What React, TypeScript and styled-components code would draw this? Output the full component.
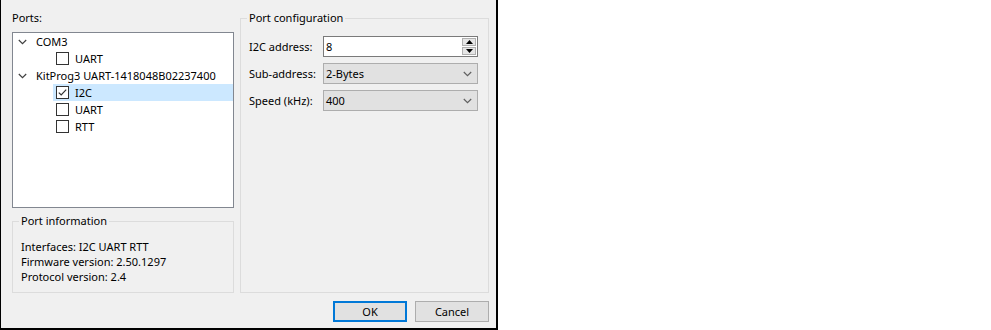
import React from "react";
import styled, { createGlobalStyle } from "styled-components";

const GlobalStyle = createGlobalStyle`
  html, body {
    margin: 0;
    padding: 0;
    background: #ffffff;
  }
  body {
    font-family: "Noto Sans", "Segoe UI", sans-serif;
    font-size: 11px;
    color: #000000;
  }
`;

const Dialog = styled.div`
  width: 498px;
  height: 330px;
  box-sizing: border-box;
  background: #f0f0f0;
  border-left: 1px solid #000;
  border-right: 2px solid #000;
  border-bottom: 2px solid #000;
  padding: 10px 7px 6px 11px;
  display: flex;
  flex-direction: column;
`;

const Main = styled.div`
  display: grid;
  grid-template-columns: 222px 249px;
  column-gap: 6px;
`;

const LeftColumn = styled.div`
  display: flex;
  flex-direction: column;
`;

const PortsLabel = styled.div`
  line-height: 16px;
  height: 16px;
  margin-bottom: 6px;
`;

const Tree = styled.div`
  height: 176px;
  box-sizing: border-box;
  border: 1px solid #828790;
  background: #ffffff;
`;

const Row = styled.div`
  display: flex;
  height: 17px;
`;

const Indent = styled.div<{ $level: number }>`
  width: ${(p) => (p.$level === 0 ? 0 : 40)}px;
  flex: none;
`;

const Item = styled.div<{ $selected?: boolean; $level: number }>`
  flex: 1;
  display: flex;
  align-items: center;
  padding-left: ${(p) => (p.$level === 0 ? 0 : 3)}px;
  background: ${(p) => (p.$selected ? "#cce8ff" : "transparent")};
  white-space: nowrap;
`;

const Expander = styled.div`
  width: 23px;
  flex: none;
  display: flex;
  align-items: center;
  padding-left: 5px;
  box-sizing: border-box;
`;

const Check = styled.div`
  width: 13px;
  height: 13px;
  box-sizing: border-box;
  border: 1px solid #333333;
  background: #ffffff;
  margin-right: 6px;
  flex: none;
  display: flex;
`;

const Group = styled.fieldset<{ $height: number; $top?: number }>`
  margin: ${(p) => p.$top ?? 0}px 0 0 0;
  padding: 0;
  height: ${(p) => p.$height}px;
  box-sizing: border-box;
  border: 1px solid #dcdcdc;
  min-width: 0;
`;

const Legend = styled.legend`
  margin-left: 6px;
  padding: 0 2px;
  line-height: 14px;
  font-size: 11px;
`;

const InfoLines = styled.div`
  padding: 11px 0 0 8px;
  line-height: 15px;
`;

const FieldGrid = styled.div`
  padding: 11px 0 0 8px;
  display: grid;
  grid-template-columns: 74px 155px;
  grid-auto-rows: 21px;
  row-gap: 6px;
  align-items: center;
`;

const SpinBox = styled.div`
  height: 21px;
  box-sizing: border-box;
  border: 1px solid #7a7a7a;
  background: #ffffff;
  display: flex;
  align-items: center;
  padding-left: 2px;
  padding-right: 1px;
`;

const FieldText = styled.span`
  flex: 1;
`;

const Spinner = styled.div`
  width: 14px;
  height: 17px;
  display: flex;
  flex-direction: column;
  gap: 1px;
`;

const SpinButton = styled.div`
  flex: 1;
  background: #e5e5e5;
  border: 1px solid #b0b0b0;
  box-sizing: border-box;
  display: flex;
  align-items: center;
  justify-content: center;
`;

const Combo = styled.div`
  height: 21px;
  box-sizing: border-box;
  border: 1px solid #adadad;
  background: #e1e1e1;
  display: flex;
  align-items: center;
  padding-left: 2px;
  padding-right: 5px;
`;

const ButtonRow = styled.div`
  display: flex;
  justify-content: flex-end;
  gap: 8px;
  margin-top: 8px;
`;

const Button = styled.button<{ $default?: boolean }>`
  width: 74px;
  height: 21px;
  box-sizing: border-box;
  margin: 0;
  padding: 0;
  font-family: inherit;
  font-size: 11px;
  color: #000;
  background: #e1e1e1;
  border: ${(p) => (p.$default ? "2px solid #0078d7" : "1px solid #adadad")};
`;

const Chevron = ({ color = "#555" }: { color?: string }) => (
  <svg width="9" height="6" viewBox="0 0 9 6">
    <path d="M0.8 1 L4.5 4.6 L8.2 1" fill="none" stroke={color} strokeWidth="1.2" />
  </svg>
);

const CheckMark = () => (
  <svg width="11" height="11" viewBox="0 0 11 11">
    <path d="M1.8 5.6 L4.2 8 L9.2 2.6" fill="none" stroke="#333" strokeWidth="1.2" />
  </svg>
);

type Node = { label: string; level: number; checked?: boolean; selected?: boolean };

const nodes: Node[] = [
  { label: "COM3", level: 0 },
  { label: "UART", level: 1 },
  { label: "KitProg3 UART-1418048B02237400", level: 0 },
  { label: "I2C", level: 1, checked: true, selected: true },
  { label: "UART", level: 1 },
  { label: "RTT", level: 1 },
];

export default function App() {
  return (
    <>
      <GlobalStyle />
      <Dialog>
        <Main>
          <LeftColumn>
            <PortsLabel>Ports:</PortsLabel>
            <Tree>
              {nodes.map((n, i) => (
                <Row key={i}>
                  <Indent $level={n.level} />
                  <Item $level={n.level} $selected={n.selected}>
                    {n.level === 0 ? (
                      <Expander>
                        <Chevron color="#404040" />
                      </Expander>
                    ) : (
                      <Check>{n.checked && <CheckMark />}</Check>
                    )}
                    {n.label}
                  </Item>
                </Row>
              ))}
            </Tree>
            <Group $height={79} $top={6}>
              <Legend>Port information</Legend>
              <InfoLines>
                <div>Interfaces: I2C UART RTT</div>
                <div>Firmware version: 2.50.1297</div>
                <div>Protocol version: 2.4</div>
              </InfoLines>
            </Group>
          </LeftColumn>
          <Group $height={282} $top={1}>
            <Legend>Port configuration</Legend>
            <FieldGrid>
              <span>I2C address:</span>
              <SpinBox>
                <FieldText>8</FieldText>
                <Spinner>
                  <SpinButton>
                    <svg width="7" height="4" viewBox="0 0 7 4">
                      <path d="M0 4 L3.5 0 L7 4 Z" fill="#000" />
                    </svg>
                  </SpinButton>
                  <SpinButton>
                    <svg width="7" height="4" viewBox="0 0 7 4">
                      <path d="M0 0 L3.5 4 L7 0 Z" fill="#000" />
                    </svg>
                  </SpinButton>
                </Spinner>
              </SpinBox>
              <span>Sub-address:</span>
              <Combo>
                <FieldText>2-Bytes</FieldText>
                <Chevron color="#606060" />
              </Combo>
              <span>Speed (kHz):</span>
              <Combo>
                <FieldText>400</FieldText>
                <Chevron color="#606060" />
              </Combo>
            </FieldGrid>
          </Group>
        </Main>
        <ButtonRow>
          <Button $default>OK</Button>
          <Button>Cancel</Button>
        </ButtonRow>
      </Dialog>
    </>
  );
}
